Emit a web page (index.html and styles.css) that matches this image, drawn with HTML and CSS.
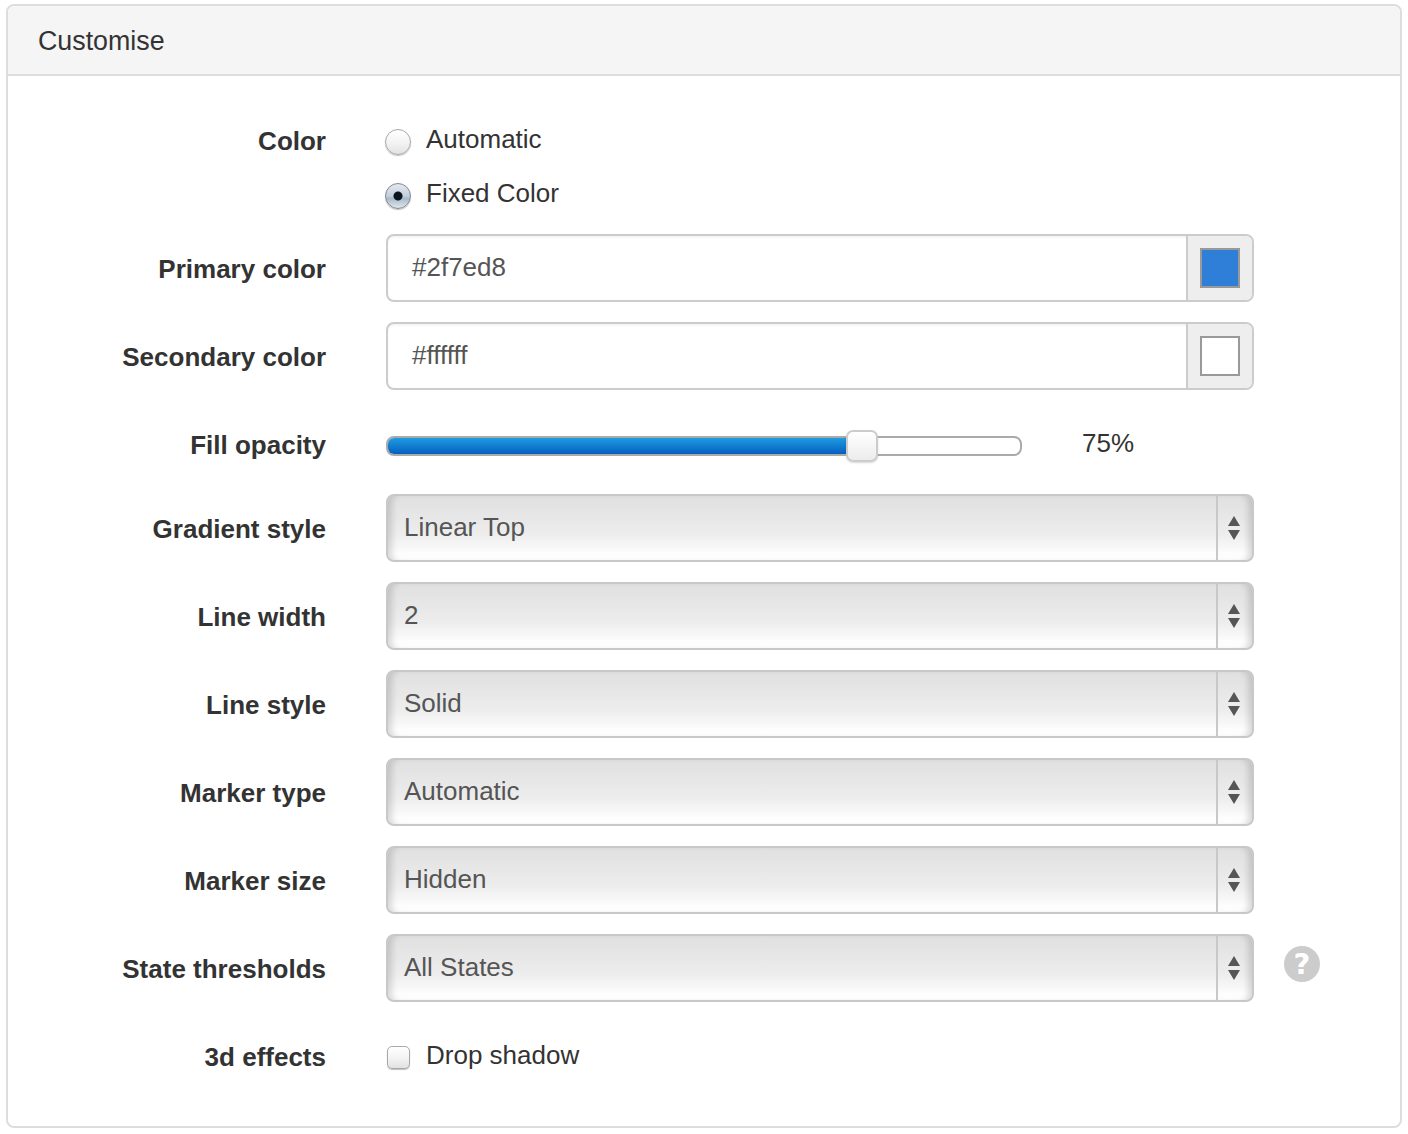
FILE: index.html
```html
<!DOCTYPE html>
<html lang="en">
<head>
    <meta charset="UTF-8">
    <title>Customise</title>
    <link rel="stylesheet" href="styles.css">
</head>
<body>
    <div class="panel">
        <div class="panel-heading">Customise</div>
        <div class="panel-body">
            <div class="row row-radios">
                <div class="label">Color</div>
                <div class="control">
                    <div class="option"><span class="radio"></span>Automatic</div>
                    <div class="option"><span class="radio checked"></span>Fixed Color</div>
                </div>
            </div>
            <div class="row">
                <div class="label">Primary color</div>
                <div class="control color-input">
                    <div class="color-value">#2f7ed8</div>
                    <div class="color-addon"><span class="swatch swatch-blue"></span></div>
                </div>
            </div>
            <div class="row">
                <div class="label">Secondary color</div>
                <div class="control color-input">
                    <div class="color-value">#ffffff</div>
                    <div class="color-addon"><span class="swatch"></span></div>
                </div>
            </div>
            <div class="row row-slider">
                <div class="label">Fill opacity</div>
                <div class="control slider-control">
                    <div class="slider">
                        <div class="slider-fill" style="width: 73%"></div>
                        <div class="slider-thumb"></div>
                    </div>
                    <div class="slider-value">75%</div>
                </div>
            </div>
            <div class="row">
                <div class="label">Gradient style</div>
                <div class="control select">
                    <div class="select-text">Linear Top</div>
                    <div class="select-arrows"><svg width="14" height="26" viewBox="0 0 14 26"><path d="M7 1L13 11H1zM1 15H13L7 25z" fill="#555"/></svg></div>
                </div>
            </div>
            <div class="row">
                <div class="label">Line width</div>
                <div class="control select">
                    <div class="select-text">2</div>
                    <div class="select-arrows"><svg width="14" height="26" viewBox="0 0 14 26"><path d="M7 1L13 11H1zM1 15H13L7 25z" fill="#555"/></svg></div>
                </div>
            </div>
            <div class="row">
                <div class="label">Line style</div>
                <div class="control select">
                    <div class="select-text">Solid</div>
                    <div class="select-arrows"><svg width="14" height="26" viewBox="0 0 14 26"><path d="M7 1L13 11H1zM1 15H13L7 25z" fill="#555"/></svg></div>
                </div>
            </div>
            <div class="row">
                <div class="label">Marker type</div>
                <div class="control select">
                    <div class="select-text">Automatic</div>
                    <div class="select-arrows"><svg width="14" height="26" viewBox="0 0 14 26"><path d="M7 1L13 11H1zM1 15H13L7 25z" fill="#555"/></svg></div>
                </div>
            </div>
            <div class="row">
                <div class="label">Marker size</div>
                <div class="control select">
                    <div class="select-text">Hidden</div>
                    <div class="select-arrows"><svg width="14" height="26" viewBox="0 0 14 26"><path d="M7 1L13 11H1zM1 15H13L7 25z" fill="#555"/></svg></div>
                </div>
            </div>
            <div class="row">
                <div class="label">State thresholds</div>
                <div class="control select">
                    <div class="select-text">All States</div>
                    <div class="select-arrows"><svg width="14" height="26" viewBox="0 0 14 26"><path d="M7 1L13 11H1zM1 15H13L7 25z" fill="#555"/></svg></div>
                </div>
                <div class="help">?</div>
            </div>
            <div class="row row-check">
                <div class="label">3d effects</div>
                <div class="control">
                    <div class="option"><span class="checkbox"></span>Drop shadow</div>
                </div>
            </div>
        </div>
    </div>
</body>
</html>
```

FILE: styles.css
```css
html, body {
    margin: 0;
    padding: 0;
    background: #fff;
}
body {
    font-family: "Liberation Sans", Arial, sans-serif;
    font-size: 26px;
    color: #333;
    padding: 4px 6px 6px;
}
.panel {
    border: 2px solid #ddd;
    border-radius: 8px;
    height: 1124px;
    box-sizing: border-box;
    width: 1396px;
}
.panel-heading {
    height: 68px;
    line-height: 70px;
    padding-left: 30px;
    font-size: 26.8px;
    background: #f5f5f5;
    border-bottom: 2px solid #ddd;
    border-radius: 6px 6px 0 0;
}
.panel-body {
    padding-top: 43px;
}
.row {
    display: flex;
    margin-bottom: 20px;
}
.label {
    width: 318px;
    flex: none;
    text-align: right;
    font-size: 26px;
    font-weight: bold;
    line-height: 40px;
    padding-top: 15px;
}
.control {
    margin-left: 60px;
    width: 868px;
    box-sizing: border-box;
}
.row-radios .label {
    padding-top: 2px;
}
.row-radios {
    margin-bottom: 21px;
}
.option {
    display: flex;
    align-items: center;
    height: 40px;
    margin-left: -1px;
}
.option + .option {
    margin-top: 14px;
}
.radio, .checkbox {
    width: 26px;
    height: 26px;
    box-sizing: border-box;
    margin-right: 15px;
    margin-top: 6px;
    border: 1px solid #a8a8a8;
    background: linear-gradient(#fff, #f4f4f4 50%, #e2e2e2);
    box-shadow: 0 1px 1px rgba(0,0,0,0.25);
    flex: none;
}
.radio {
    border-radius: 50%;
}
.radio.checked {
    background: radial-gradient(circle, #0c1420 0, #0c1420 4px, transparent 5px), linear-gradient(#e4e9f0, #c3cfdd 50%, #a9b9ca 60%, #dfe6ee);
    border-color: #85878a;
}
.checkbox {
    width: 23px;
    height: 23px;
    margin-left: 2px;
    margin-right: 16px;
    margin-top: 5px;
    border-radius: 5px;
}
.color-input {
    display: flex;
    height: 68px;
    border: 2px solid #ccc;
    border-radius: 8px;
    box-shadow: inset 0 2px 2px rgba(0,0,0,0.04);
}
.color-value {
    flex: 1;
    padding-left: 24px;
    line-height: 62px;
    color: #555;
}
.color-addon {
    display: flex;
    align-items: center;
    justify-content: center;
    width: 66px;
    box-sizing: border-box;
    background: #eee;
    border-left: 2px solid #ccc;
    border-radius: 0 6px 6px 0;
}
.swatch {
    width: 40px;
    height: 40px;
    box-sizing: border-box;
    background: #fff;
    border: 2px solid #999;
}
.swatch-blue {
    background: #2f7ed8;
}
.row-slider {
    height: 64px;
    margin-bottom: 20px;
}
.row-slider .label {
    padding-top: 15px;
}
.slider-control {
    display: flex;
    padding-top: 26px;
}
.slider {
    position: relative;
    width: 636px;
    height: 20px;
    box-sizing: border-box;
    border: 2px solid #aaa;
    border-radius: 8px;
    background: #fff;
}
.slider-fill {
    height: 16px;
    border-radius: 6px 0 0 6px;
    background: linear-gradient(#1f9be0, #0560c0);
}
.slider-thumb {
    position: absolute;
    left: 458px;
    top: -8px;
    width: 32px;
    height: 32px;
    box-sizing: border-box;
    border: 2px solid #ccc;
    border-radius: 7px;
    background: linear-gradient(#fff, #ececec);
    box-shadow: 0 1px 2px rgba(0,0,0,0.15);
}
.slider-value {
    margin-left: 60px;
    margin-top: -13px;
    line-height: 40px;
}
.select {
    display: flex;
    height: 68px;
    border: 2px solid #c8c8c8;
    border-radius: 8px;
    color: #555;
    background: linear-gradient(#e0e0e0, #ededed 60%, #fdfdfd 90%);
    box-shadow: inset 8px 0 6px -4px rgba(0,0,0,0.14), inset -8px 0 6px -4px rgba(0,0,0,0.14);
}
.select-text {
    flex: 1;
    padding-left: 16px;
    line-height: 62px;
}
.select-arrows {
    display: flex;
    align-items: center;
    justify-content: center;
    width: 31px;
    padding-right: 3px;
    border-left: 2px solid #c8c8c8;
}
.help {
    width: 36px;
    height: 36px;
    margin: 12px 0 0 30px;
    border-radius: 50%;
    background: #ccc;
    color: #fff;
    font-family: "DejaVu Sans", sans-serif;
    font-weight: bold;
    font-size: 29px;
    line-height: 36px;
    text-align: center;
}
.row-check .label {
    padding-top: 15px;
}
.row-check .control {
    padding-top: 13px;
}
```
